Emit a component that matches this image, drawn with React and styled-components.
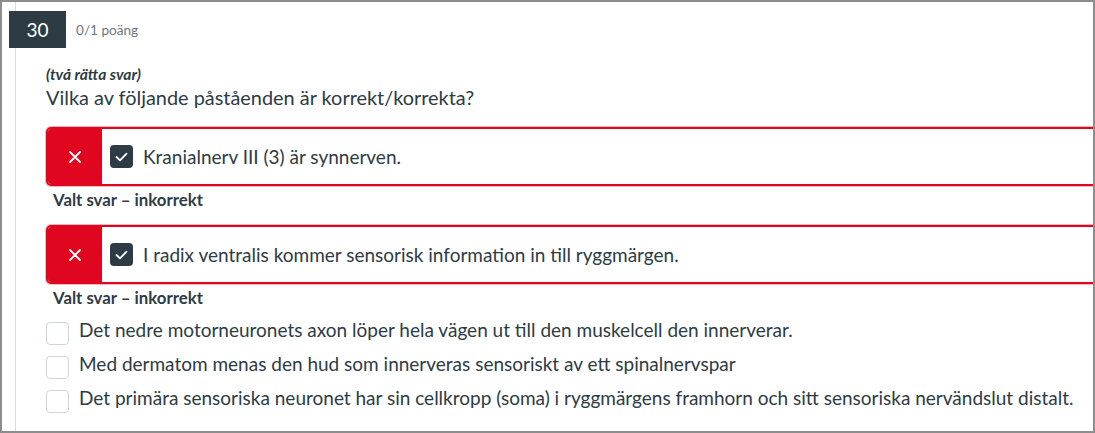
import React from "react";
import styled, { createGlobalStyle } from "styled-components";

const Global = createGlobalStyle`
  html, body { margin: 0; padding: 0; background: #ffffff; }
  body { font-family: Lato, "Noto Sans", sans-serif; color: #2d3b45; }
`;

const Frame = styled.div`
  width: 1095px;
  height: 433px;
  box-sizing: border-box;
  border: 2px solid #8d8d8d;
  overflow: hidden;
  background: #fff;
`;

const Card = styled.div`
  margin-left: 13px;
  height: 100%;
  border-left: 1px solid #d9dcdf;
  box-sizing: border-box;
`;

const Header = styled.div`
  display: flex;
  align-items: center;
  margin-left: -7px;
  padding-top: 9px;
`;

const NumberBox = styled.div`
  width: 57px;
  height: 37px;
  background: #2d3b45;
  color: #fff;
  font-size: 19px;
  display: flex;
  align-items: center;
  justify-content: center;
`;

const Points = styled.span`
  margin-left: 10px;
  font-size: 13.6px;
  color: #6b7780;
`;

const Body = styled.div`
  padding-left: 30px;
  margin-right: -12px;
`;

const Hint = styled.div`
  margin-top: 18px;
  font-size: 15.6px;
  line-height: 17px;
  font-weight: 700;
  font-style: italic;
`;

const Question = styled.div`
  margin-top: 1px;
  font-size: 19.9px;
  line-height: 26px;
`;

const AnswerBox = styled.div`
  margin-top: ${(p) => p.$top}px;
  display: flex;
  align-items: stretch;
  height: 59px;
  box-sizing: border-box;
  border: 2px solid #e0061f;
  border-radius: 5px 0 0 5px;
  box-shadow: 0 0 0 1px rgba(224, 6, 31, 0.3);
`;

const Mark = styled.div`
  width: 54px;
  background: #e0061f;
  display: flex;
  align-items: center;
  justify-content: center;
  border-radius: 3px 0 0 3px;
`;

const AnswerContent = styled.div`
  display: flex;
  align-items: center;
  padding-left: 8px;
  font-size: 19px;
`;

const CheckBox = styled.span`
  width: 23px;
  height: 23px;
  flex: none;
  box-sizing: border-box;
  border-radius: 4px;
  display: inline-flex;
  align-items: center;
  justify-content: center;
  background: ${(p) => (p.$checked ? "#2d3b45" : "#fff")};
  border: ${(p) => (p.$checked ? "none" : "1px solid #d0d5d9")};
  margin-right: ${(p) => p.$gap}px;
  margin-top: ${(p) => p.$offset || 0}px;
`;

const Feedback = styled.div`
  margin-top: 3px;
  padding-left: 7px;
  font-size: 16.8px;
  line-height: 22px;
  font-weight: 700;
`;

const Options = styled.div`
  margin-top: 9px;
  display: flex;
  flex-direction: column;
  gap: 7px;
`;

const Option = styled.div`
  display: flex;
  align-items: flex-start;
  font-size: 19px;
  line-height: 24px;
`;

const XIcon = () => (
  <svg width="12" height="12" viewBox="0 0 12 12">
    <path d="M1 1 L11 11 M11 1 L1 11" stroke="#fff" strokeWidth="1.8" strokeLinecap="round" />
  </svg>
);

const Check = () => (
  <svg width="13" height="10" viewBox="0 0 13 10">
    <path d="M1.5 5 L5 8.3 L11.5 1.7" stroke="#fff" strokeWidth="1.8" fill="none" strokeLinecap="round" strokeLinejoin="round" />
  </svg>
);

const chosen = [
  { text: "Kranialnerv III (3) är synnerven.", top: 17 },
  { text: "I radix ventralis kommer sensorisk information in till ryggmärgen.", top: 14 },
];

const others = [
  "Det nedre motorneuronets axon löper hela vägen ut till den muskelcell den innerverar.",
  "Med dermatom menas den hud som innerveras sensoriskt av ett spinalnervspar",
  "Det primära sensoriska neuronet har sin cellkropp (soma) i ryggmärgens framhorn och sitt sensoriska nervändslut distalt.",
];

export default function App() {
  return (
    <>
      <Global />
      <Frame>
        <Card>
          <Header>
            <NumberBox>30</NumberBox>
            <Points>0/1 poäng</Points>
          </Header>
          <Body>
            <Hint>(två rätta svar)</Hint>
            <Question>Vilka av följande påståenden är korrekt/korrekta?</Question>
            {chosen.map((a) => (
              <React.Fragment key={a.text}>
                <AnswerBox $top={a.top}>
                  <Mark>
                    <XIcon />
                  </Mark>
                  <AnswerContent>
                    <CheckBox $checked $gap={10}>
                      <Check />
                    </CheckBox>
                    {a.text}
                  </AnswerContent>
                </AnswerBox>
                <Feedback>Valt svar – inkorrekt</Feedback>
              </React.Fragment>
            ))}
            <Options>
              {others.map((t) => (
                <Option key={t}>
                  <CheckBox $gap={10} $offset={4} />
                  {t}
                </Option>
              ))}
            </Options>
          </Body>
        </Card>
      </Frame>
    </>
  );
}
